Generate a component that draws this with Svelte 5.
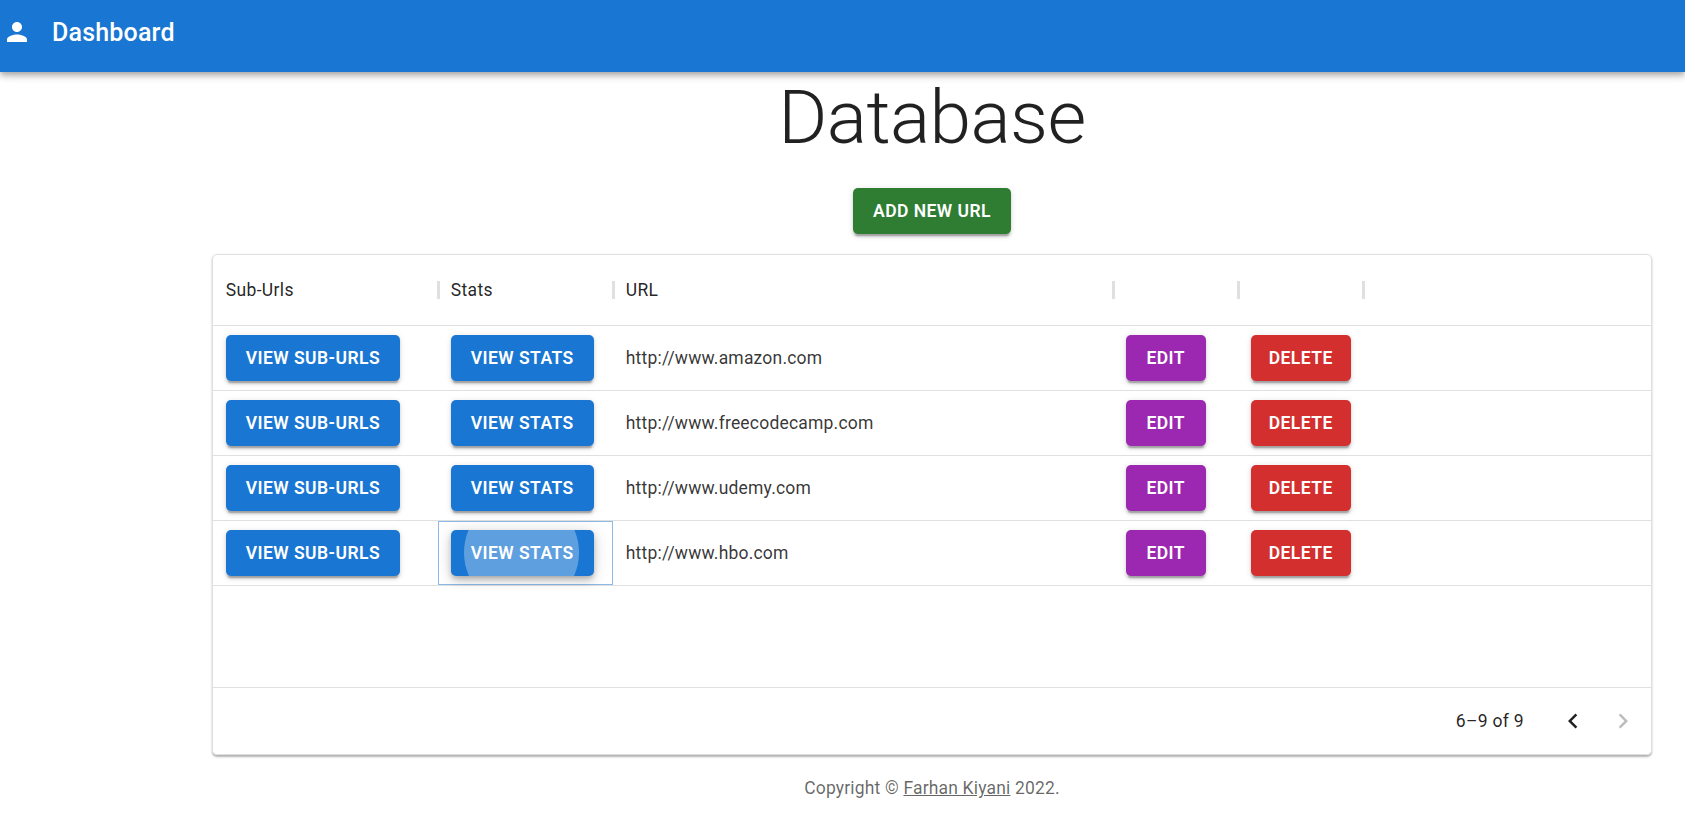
<script lang="ts">
	const rows = [
		{ url: 'http://www.amazon.com' },
		{ url: 'http://www.freecodecamp.com' },
		{ url: 'http://www.udemy.com' },
		{ url: 'http://www.hbo.com', focused: true }
	];
</script>

<header class="appbar">
	<svg class="person" viewBox="0 0 24 24" aria-hidden="true">
		<path d="M12 12c2.21 0 4-1.79 4-4s-1.79-4-4-4-4 1.79-4 4 1.79 4 4 4zm0 2c-2.67 0-8 1.34-8 4v2h16v-2c0-2.66-5.33-4-8-4z" />
	</svg>
	<span class="brand">Dashboard</span>
</header>

<main class="page">
	<h1>Database</h1>
	<div class="add-row">
		<button class="btn green">Add new url</button>
	</div>

	<section class="grid">
		<div class="row head">
			<div class="cell">Sub-Urls</div>
			<div class="cell">Stats</div>
			<div class="cell">URL</div>
			<div class="cell"></div>
			<div class="cell"></div>
		</div>

		{#each rows as row (row.url)}
			<div class="row">
				<div class="cell"><button class="btn blue">View sub-urls</button></div>
				<div class="cell" class:focused={row.focused}>
					<button class="btn blue" class:raised={row.focused}>
						View stats
						{#if row.focused}<span class="ripple"></span>{/if}
					</button>
				</div>
				<div class="cell url">{row.url}</div>
				<div class="cell"><button class="btn purple wide">Edit</button></div>
				<div class="cell"><button class="btn red wide">Delete</button></div>
			</div>
		{/each}

		<div class="spacer"></div>

		<div class="pager">
			<span class="count">6–9 of 9</span>
			<svg class="chev" viewBox="0 0 24 24" aria-hidden="true">
				<path d="M15.41 7.41 14 6l-6 6 6 6 1.41-1.41L10.83 12z" />
			</svg>
			<svg class="chev off" viewBox="0 0 24 24" aria-hidden="true">
				<path d="M10 6 8.59 7.41 13.17 12l-4.58 4.59L10 18l6-6z" />
			</svg>
		</div>
	</section>

	<p class="copy">Copyright © <a href="#top">Farhan Kiyani</a> 2022.</p>
</main>

<style>
	:global(body) {
		margin: 0;
		background: #fff;
		font-family: Roboto, "Liberation Sans", sans-serif;
		color: rgba(0, 0, 0, 0.87);
	}

	.appbar {
		height: 72px;
		box-sizing: border-box;
		padding: 17px 0 0 2px;
		display: flex;
		align-items: flex-start;
		gap: 20px;
		background: #1976d2;
		color: #fff;
		box-shadow:
			0 2.5px 5px -1px rgba(0, 0, 0, 0.2),
			0 5px 6px 0 rgba(0, 0, 0, 0.14),
			0 1.25px 12px 0 rgba(0, 0, 0, 0.12);
		position: relative;
	}

	.person {
		width: 30px;
		height: 30px;
		fill: #fff;
	}

	.brand {
		font-size: 25px;
		font-weight: 500;
		line-height: 30px;
		letter-spacing: 0.19px;
		padding-top: 1px;
	}

	.page {
		width: 1440px;
		margin-left: 212px;
		text-align: center;
	}

	h1 {
		margin: 0;
		font-size: 75px;
		font-weight: 300;
		line-height: 90px;
		letter-spacing: -0.62px;
		color: rgba(0, 0, 0, 0.87);
	}

	.add-row {
		padding: 26px 0 20.5px;
		display: flex;
		justify-content: center;
	}

	.btn {
		position: relative;
		display: inline-flex;
		align-items: center;
		justify-content: center;
		box-sizing: border-box;
		height: 45.6px;
		padding: 0 20px;
		border: 0;
		border-radius: 5px;
		overflow: hidden;
		white-space: nowrap;
		font-family: inherit;
		font-size: 17.5px;
		font-weight: 600;
		letter-spacing: 0.45px;
		text-transform: uppercase;
		color: #fff;
		box-shadow:
			0 3.75px 1.25px -2.5px rgba(0, 0, 0, 0.2),
			0 2.5px 2.5px 0 rgba(0, 0, 0, 0.14),
			0 1.25px 6.25px 0 rgba(0, 0, 0, 0.12);
	}

	.btn.raised {
		box-shadow:
			0 2.5px 5px -1px rgba(0, 0, 0, 0.2),
			0 5px 10px 0 rgba(0, 0, 0, 0.14),
			0 1.25px 18px 0 rgba(0, 0, 0, 0.12);
	}

	.blue { background: #1976d2; }
	.green { background: #2e7d32; }
	.purple { background: #9c27b0; }
	.red { background: #d32f2f; }
	.wide { width: 100px; flex: none; }
	.purple.wide { width: 80px; }

	.ripple {
		position: absolute;
		left: 13px;
		top: -35px;
		width: 115px;
		height: 115px;
		border-radius: 50%;
		background: rgba(255, 255, 255, 0.3);
	}

	.grid {
		display: flex;
		flex-direction: column;
		height: 501px;
		box-sizing: border-box;
		border: 1.25px solid #e0e0e0;
		border-radius: 5px;
		box-shadow: 0 1.25px 2px rgba(0, 0, 0, 0.3);
		text-align: left;
		font-size: 17.5px;
		letter-spacing: 0.2px;
	}

	.row {
		display: grid;
		grid-template-columns: 225px 175px 500px 125px 125px 1fr;
		height: 65px;
		box-sizing: border-box;
		border-bottom: 1.25px solid #e0e0e0;
	}

	.row.head {
		height: 70.7px;
		letter-spacing: 0.35px;
	}

	.cell {
		position: relative;
		display: flex;
		align-items: center;
		padding: 0 12.75px;
		box-sizing: border-box;
		min-width: 0;
	}

	.cell.url {
		color: rgba(0, 0, 0, 0.8);
	}

	.head .cell::after {
		content: "";
		position: absolute;
		right: -1.5px;
		top: 26px;
		width: 3px;
		height: 18px;
		background: #e0e0e0;
	}

	.cell.focused {
		outline: 1.25px solid rgba(25, 118, 210, 0.5);
		outline-offset: -1.25px;
	}

	.spacer {
		flex: 1;
	}

	.pager {
		display: flex;
		align-items: center;
		justify-content: flex-end;
		height: 67px;
		box-sizing: border-box;
		padding: 0 13px 0 0;
		border-top: 1.25px solid #e0e0e0;
	}

	.count {
		margin-right: 34px;
		letter-spacing: 0.3px;
	}

	.chev {
		width: 30px;
		height: 30px;
		fill: rgba(0, 0, 0, 0.87);
	}

	.chev + .chev {
		margin-left: 20px;
	}

	.chev.off {
		fill: rgba(0, 0, 0, 0.26);
	}

	.copy {
		margin: 21px 0 0;
		font-size: 17.5px;
		line-height: 25px;
		letter-spacing: 0.17px;
		color: rgba(0, 0, 0, 0.6);
	}

	.copy a {
		color: inherit;
	}
</style>
